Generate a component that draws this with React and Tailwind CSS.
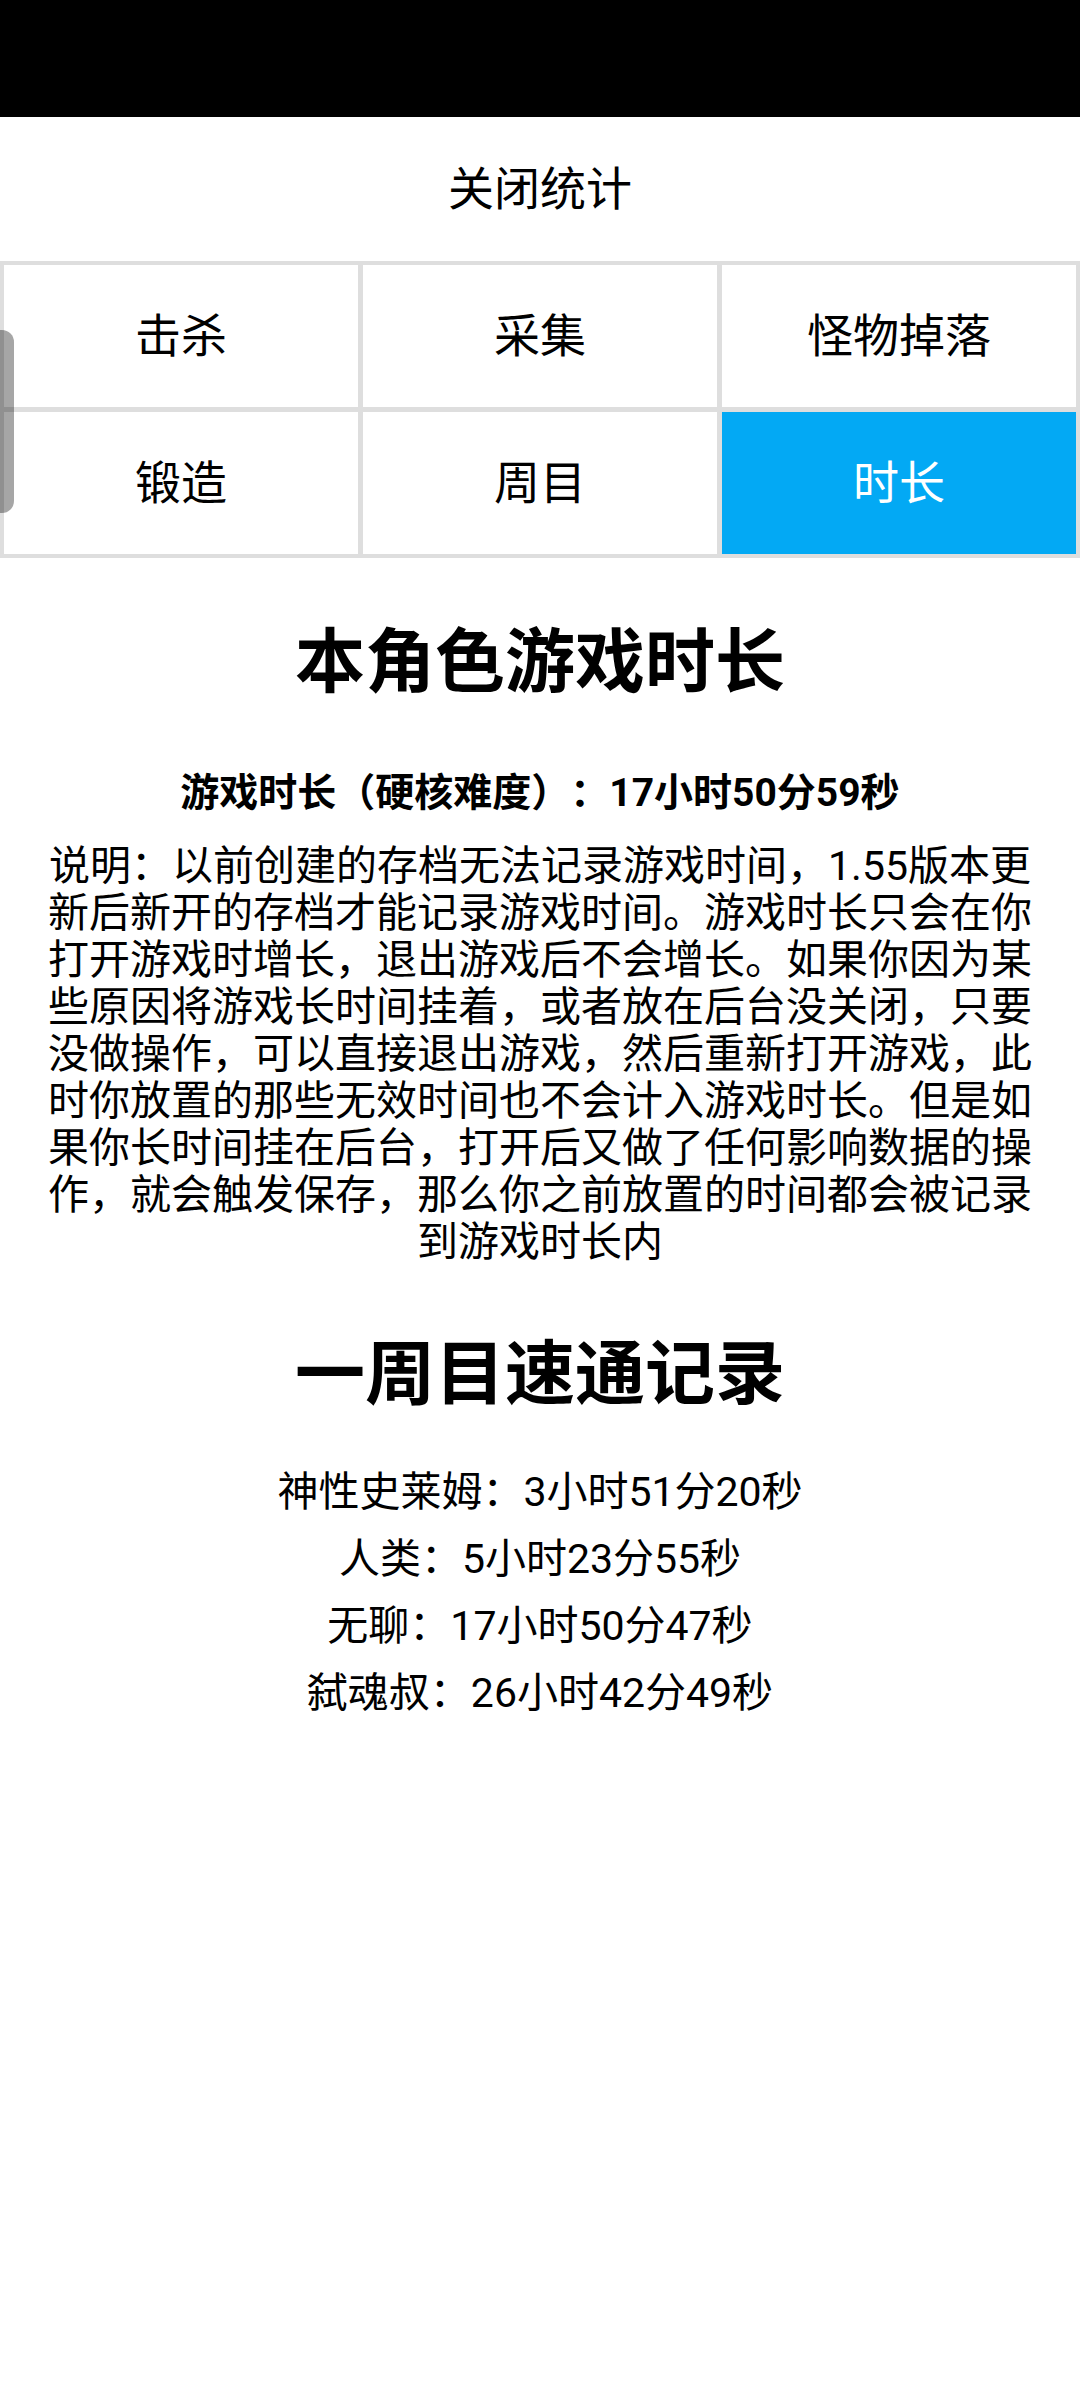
import React from 'react';

const tabs = [
  { label: '击杀' },
  { label: '采集' },
  { label: '怪物掉落' },
  { label: '锻造' },
  { label: '周目' },
  { label: '时长', active: true },
];

const records = [
  '神性史莱姆：3小时51分20秒',
  '人类：5小时23分55秒',
  '无聊：17小时50分47秒',
  '弑魂叔：26小时42分49秒',
];

const note =
  '说明：以前创建的存档无法记录游戏时间，1.55版本更新后新开的存档才能记录游戏时间。游戏时长只会在你打开游戏时增长，退出游戏后不会增长。如果你因为某些原因将游戏长时间挂着，或者放在后台没关闭，只要没做操作，可以直接退出游戏，然后重新打开游戏，此时你放置的那些无效时间也不会计入游戏时长。但是如果你长时间挂在后台，打开后又做了任何影响数据的操作，就会触发保存，那么你之前放置的时间都会被记录到游戏时长内';

export default function App() {
  return (
    <div className="relative w-[1080px] min-h-[2387px] bg-white text-black font-['Roboto','Noto_Sans_CJK_SC',sans-serif] [text-spacing-trim:space-all]">
      <div className="h-[117px] bg-black" />

      <div className="h-[144px] flex items-center justify-center text-[46px] leading-none">关闭统计</div>

      <div className="grid grid-cols-3 gap-[5px] p-[4px] bg-[#dedede]">
        {tabs.map((t) => (
          <div
            key={t.label}
            className={
              'h-[142px] flex items-center justify-center text-[46px] leading-none ' +
              (t.active ? 'bg-[#03a9f4] text-white' : 'bg-white text-black')
            }
          >
            {t.label}
          </div>
        ))}
      </div>

      {/* scroll handle on the left edge */}
      <div className="absolute left-0 top-[330px] w-[14px] h-[183px] rounded-r-[12px] bg-black/35" />

      <h1 className="mt-[63px] text-center text-[70px] font-bold leading-[84px]">本角色游戏时长</h1>

      <div className="mt-[65px] text-center text-[39px] font-bold leading-[46px]">
        游戏时长（硬核难度）：17小时50分59秒
      </div>

      <p className="mt-[27px] px-[46px] text-center text-[41px] leading-[47px]">{note}</p>

      <h2 className="mt-[67px] text-center text-[70px] font-bold leading-[84px]">一周目速通记录</h2>

      <div className="mt-[42px] flex flex-col items-center text-[41px] leading-[67px]">
        {records.map((r) => (
          <div key={r}>{r}</div>
        ))}
      </div>
    </div>
  );
}
